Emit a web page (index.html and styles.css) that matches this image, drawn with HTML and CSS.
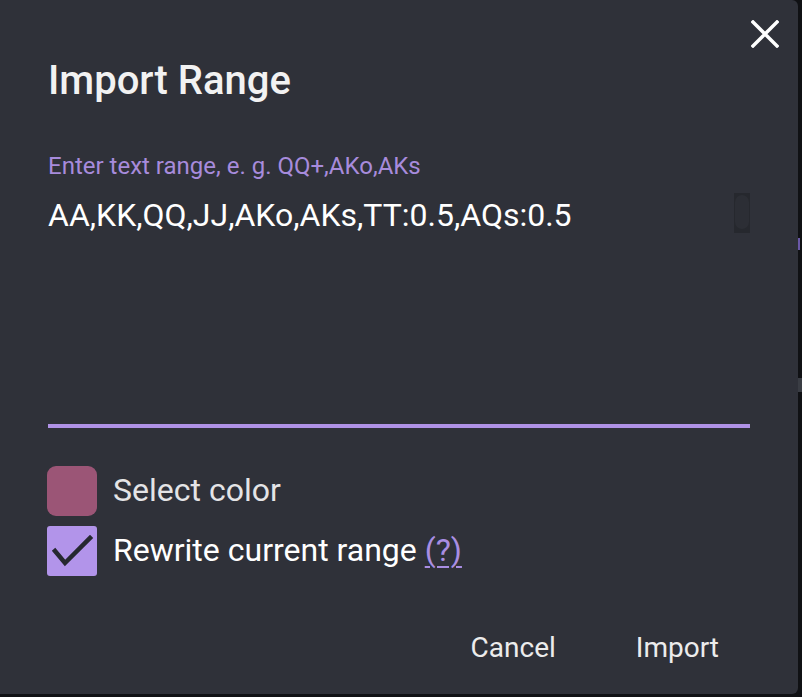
FILE: index.html
```html
<!DOCTYPE html>
<html>
<head>
<meta charset="utf-8">
<link rel="stylesheet" href="styles.css">
</head>
<body>
<div class="backdrop">
  <div class="dialog">
    <button class="close" aria-label="Close">
      <svg width="28" height="28" viewBox="0 0 28 28"><path d="M2 2 L26 26 M26 2 L2 26" stroke="#ffffff" stroke-width="3.4" stroke-linecap="square" fill="none"/></svg>
    </button>
    <h1 class="title">Import Range</h1>
    <div class="field">
      <label class="field-label">Enter text range, e. g. QQ+,AKo,AKs</label>
      <div class="field-input">AA,KK,QQ,JJ,AKo,AKs,TT:0.5,AQs:0.5</div>
      <div class="scrollbar"><div class="thumb"></div></div>
    </div>
    <div class="options">
      <div class="option">
        <span class="swatch"></span>
        <span class="option-text dim">Select color</span>
      </div>
      <div class="option">
        <span class="checkbox">
          <svg width="50" height="50" viewBox="0 0 50 50"><path d="M8 25 L18 37 L43 12" stroke="#262830" stroke-width="4.5" fill="none" stroke-linecap="square"/></svg>
        </span>
        <span class="option-text">Rewrite current range <a class="help">(?)</a></span>
      </div>
    </div>
    <div class="actions">
      <button class="btn">Cancel</button>
      <button class="btn">Import</button>
    </div>
  </div>
  <div class="side">
    <span class="side-mark purple"></span>
    <span class="side-mark gray"></span>
  </div>
</div>
</body>
</html>
```
FILE: styles.css
```css
html, body {
  margin: 0;
  padding: 0;
  background: #101114;
  font-family: Roboto, "Noto Sans", sans-serif;
}
.backdrop {
  width: 802px;
  height: 697px;
  display: flex;
  background: #101114;
}
.dialog {
  position: relative;
  width: 798px;
  height: 694px;
  box-sizing: border-box;
  background: #2f3139;
  border-radius: 0 6px 6px 0;
  padding: 0 48px 0 47px;
  display: flex;
  flex-direction: column;
}
.close {
  position: absolute;
  top: 20px;
  right: 19px;
  width: 28px;
  height: 28px;
  padding: 0;
  border: 0;
  background: transparent;
  display: flex;
}
.title {
  margin: 58px 0 0 1px;
  font-size: 40px;
  line-height: 46px;
  font-weight: 500;
  color: #f2f2f2;
}
.field {
  position: relative;
  margin-top: 48px;
  margin-left: 1px;
  height: 276px;
  border-bottom: 4px solid #b092e6;
  box-sizing: border-box;
}
.field-label {
  display: block;
  font-size: 24px;
  line-height: 28px;
  color: #a78bdc;
}
.field-input {
  margin-top: 16px;
  font-size: 32px;
  line-height: 38px;
  color: #ffffff;
}
.scrollbar {
  position: absolute;
  right: 0;
  top: 41px;
  width: 16px;
  height: 40px;
  background: #26282e;
  box-sizing: border-box;
  padding: 2px 1px;
}
.thumb {
  width: 14px;
  height: 34px;
  border-radius: 7px;
  background: #2c2e35;
}
.options {
  margin-top: 38px;
  display: flex;
  flex-direction: column;
  gap: 10px;
}
.option {
  display: flex;
  align-items: center;
  gap: 16px;
}
.option-text {
  font-size: 32px;
  line-height: 36px;
  color: #ffffff;
  margin-top: -2px;
}
.swatch {
  width: 50px;
  height: 50px;
  border-radius: 9px;
  background: #9b5576;
}
.checkbox {
  width: 50px;
  height: 50px;
  border-radius: 3px;
  background: #b294ea;
  display: flex;
}
.option-text.dim {
  color: #e4e4e6;
}
.help {
  color: #a98ee3;
  text-decoration: underline;
  text-decoration-thickness: 2px;
  text-underline-offset: 5px;
}
.actions {
  margin-top: 47px;
  display: flex;
  justify-content: flex-end;
  gap: 48px;
  padding-right: 15px;
}
.btn {
  font-family: Roboto, "Noto Sans", sans-serif;
  font-size: 28px;
  background: transparent;
  border: 0;
  color: #ececec;
  padding: 8px 16px;
}
.side {
  flex: 1;
  display: flex;
  flex-direction: column;
  padding-top: 238px;
}
.side-mark {
  display: block;
}
.side-mark.purple {
  height: 12px;
  border-left: 2px solid #6a58a8;
}
.side-mark.gray {
  margin-top: 128px;
  height: 14px;
  background: #3a3d44;
}
```
